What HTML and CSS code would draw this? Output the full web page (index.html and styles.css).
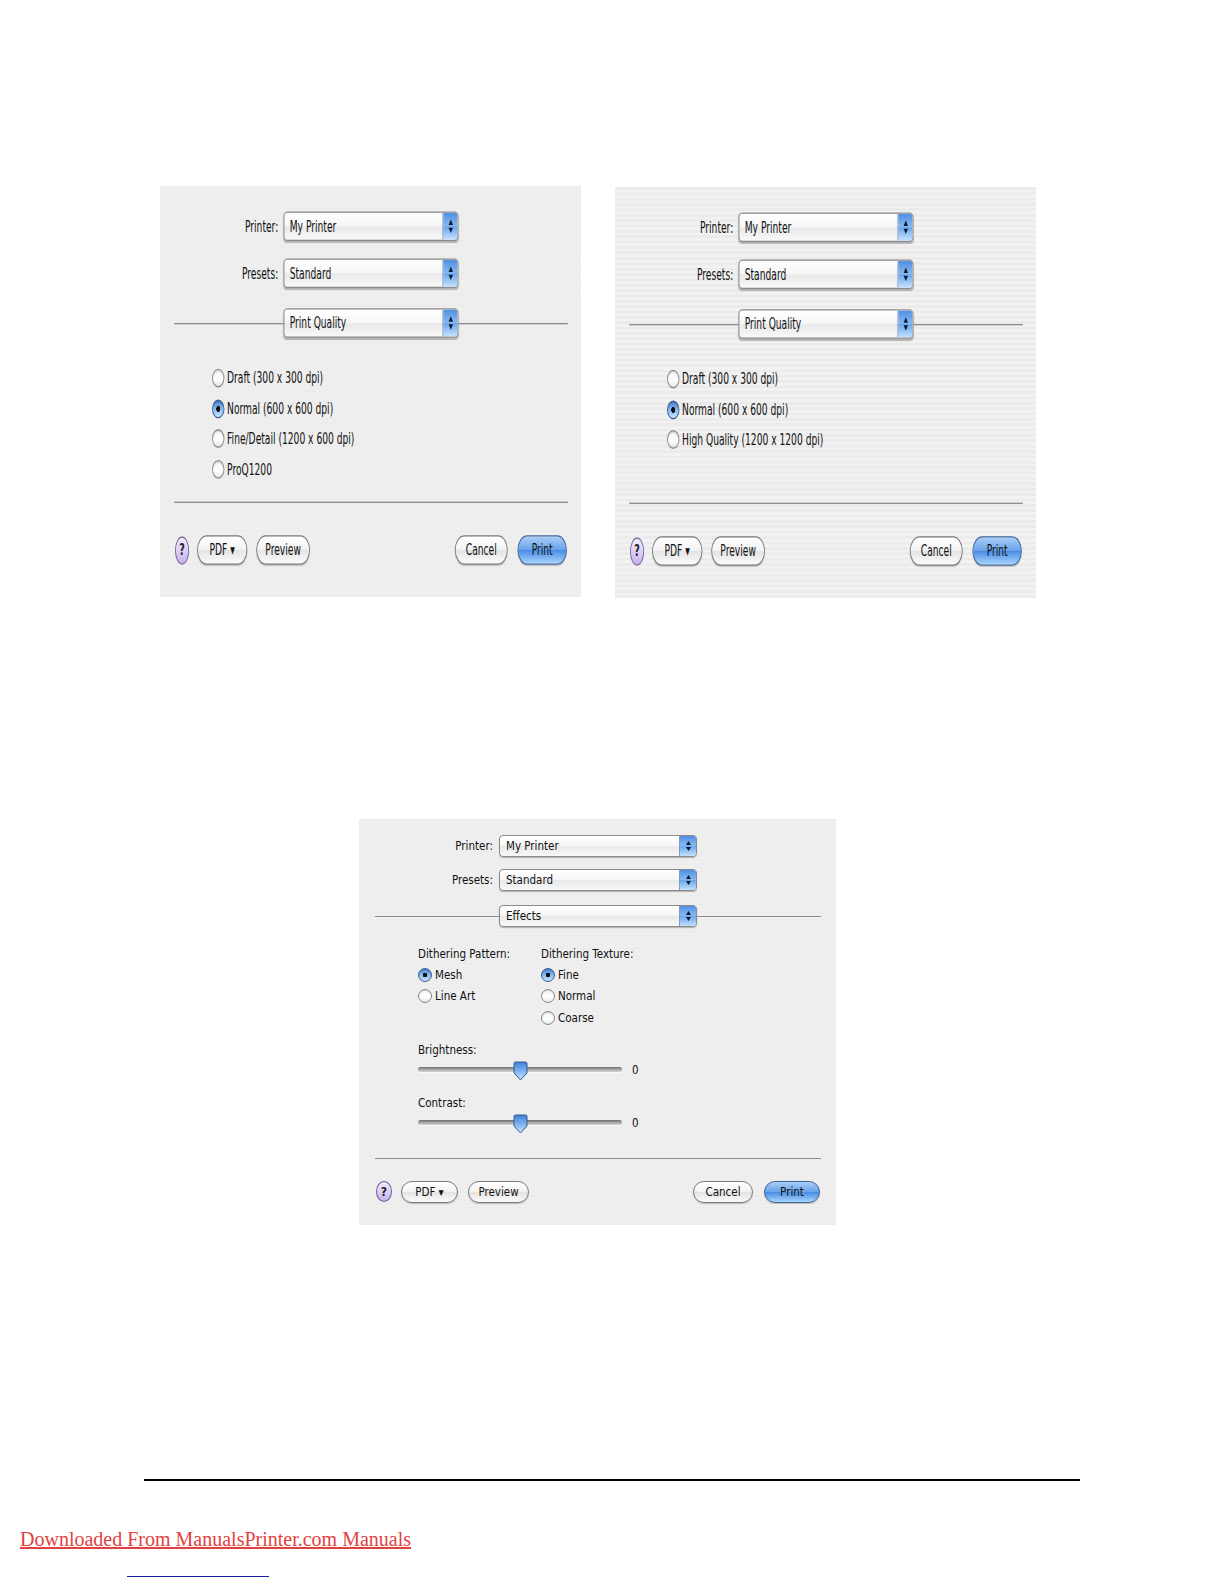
FILE: index.html
```html
<!DOCTYPE html>
<html lang="en">

<head>
    <meta charset="UTF-8">
    <meta name="viewport" content="width=device-width, initial-scale=1.0">
    <title>Print Dialogs</title>
    <link rel="stylesheet" href="styles.css">
</head>

<body>
    <main>
        <div class="shots-row">
            <!-- Print Quality panel, first driver -->
            <div class="shot">
                <div class="dialog dialog-quality">
                    <div class="field">
                        <span class="field-label">Printer:</span>
                        <div class="popup"><span class="popup-text">My Printer</span><span class="popup-arrows"><svg width="7" height="14" viewBox="0 0 7 14"><polygon points="3.5,2 6,6 1,6" /><polygon points="1,8 6,8 3.5,12" /></svg></span></div>
                    </div>
                    <div class="field field-second">
                        <span class="field-label">Presets:</span>
                        <div class="popup"><span class="popup-text">Standard</span><span class="popup-arrows"><svg width="7" height="14" viewBox="0 0 7 14"><polygon points="3.5,2 6,6 1,6" /><polygon points="1,8 6,8 3.5,12" /></svg></span></div>
                    </div>
                    <div class="divider-row">
                        <div class="popup"><span class="popup-text">Print Quality</span><span class="popup-arrows"><svg width="7" height="14" viewBox="0 0 7 14"><polygon points="3.5,2 6,6 1,6" /><polygon points="1,8 6,8 3.5,12" /></svg></span></div>
                    </div>
                    <div class="options">
                        <div class="option"><span class="radio"></span>Draft (300 x 300 dpi)</div>
                        <div class="option"><span class="radio checked"></span>Normal (600 x 600 dpi)</div>
                        <div class="option"><span class="radio"></span>Fine/Detail (1200 x 600 dpi)</div>
                        <div class="option"><span class="radio"></span>ProQ1200</div>
                    </div>
                    <hr class="rule">
                    <div class="actions">
                        <span class="help">?</span>
                        <span class="btn btn-pdf">PDF ▾</span>
                        <span class="btn btn-preview">Preview</span>
                        <span class="btn btn-cancel">Cancel</span>
                        <span class="btn btn-print">Print</span>
                    </div>
                </div>
            </div>

            <!-- Print Quality panel, second driver -->
            <div class="shot">
                <div class="dialog dialog-quality dialog-striped">
                    <div class="field">
                        <span class="field-label">Printer:</span>
                        <div class="popup"><span class="popup-text">My Printer</span><span class="popup-arrows"><svg width="7" height="14" viewBox="0 0 7 14"><polygon points="3.5,2 6,6 1,6" /><polygon points="1,8 6,8 3.5,12" /></svg></span></div>
                    </div>
                    <div class="field field-second">
                        <span class="field-label">Presets:</span>
                        <div class="popup"><span class="popup-text">Standard</span><span class="popup-arrows"><svg width="7" height="14" viewBox="0 0 7 14"><polygon points="3.5,2 6,6 1,6" /><polygon points="1,8 6,8 3.5,12" /></svg></span></div>
                    </div>
                    <div class="divider-row">
                        <div class="popup"><span class="popup-text">Print Quality</span><span class="popup-arrows"><svg width="7" height="14" viewBox="0 0 7 14"><polygon points="3.5,2 6,6 1,6" /><polygon points="1,8 6,8 3.5,12" /></svg></span></div>
                    </div>
                    <div class="options">
                        <div class="option"><span class="radio"></span>Draft (300 x 300 dpi)</div>
                        <div class="option"><span class="radio checked"></span>Normal (600 x 600 dpi)</div>
                        <div class="option"><span class="radio"></span>High Quality (1200 x 1200 dpi)</div>
                    </div>
                    <hr class="rule">
                    <div class="actions">
                        <span class="help">?</span>
                        <span class="btn btn-pdf">PDF ▾</span>
                        <span class="btn btn-preview">Preview</span>
                        <span class="btn btn-cancel">Cancel</span>
                        <span class="btn btn-print">Print</span>
                    </div>
                </div>
            </div>
        </div>

        <!-- Effects panel -->
        <div class="shot-single">
            <div class="dialog dialog-effects">
                <div class="field">
                    <span class="field-label">Printer:</span>
                    <div class="popup"><span class="popup-text">My Printer</span><span class="popup-arrows"><svg width="7" height="14" viewBox="0 0 7 14"><polygon points="3.5,2 6,6 1,6" /><polygon points="1,8 6,8 3.5,12" /></svg></span></div>
                </div>
                <div class="field field-second">
                    <span class="field-label">Presets:</span>
                    <div class="popup"><span class="popup-text">Standard</span><span class="popup-arrows"><svg width="7" height="14" viewBox="0 0 7 14"><polygon points="3.5,2 6,6 1,6" /><polygon points="1,8 6,8 3.5,12" /></svg></span></div>
                </div>
                <div class="divider-row">
                    <div class="popup"><span class="popup-text">Effects</span><span class="popup-arrows"><svg width="7" height="14" viewBox="0 0 7 14"><polygon points="3.5,2 6,6 1,6" /><polygon points="1,8 6,8 3.5,12" /></svg></span></div>
                </div>
                <div class="dither">
                    <div class="dither-col">
                        <div class="group-title">Dithering Pattern:</div>
                        <div class="option"><span class="radio checked"></span>Mesh</div>
                        <div class="option"><span class="radio"></span>Line Art</div>
                    </div>
                    <div class="dither-col">
                        <div class="group-title">Dithering Texture:</div>
                        <div class="option"><span class="radio checked"></span>Fine</div>
                        <div class="option"><span class="radio"></span>Normal</div>
                        <div class="option"><span class="radio"></span>Coarse</div>
                    </div>
                </div>
                <div class="adjust">
                    <div class="group-title">Brightness:</div>
                    <div class="slider">
                        <div class="track">
                            <svg class="thumb" width="15" height="20" viewBox="0 0 15 20">
                                <defs>
                                    <linearGradient id="thumbFill" x1="0" y1="0" x2="0" y2="1">
                                        <stop offset="0" stop-color="#3f7fd6" />
                                        <stop offset="0.5" stop-color="#7db3f0" />
                                        <stop offset="1" stop-color="#c9e4ff" />
                                    </linearGradient>
                                </defs>
                                <path d="M2.5 1 H12.5 Q14 1 14 2.5 V12 L7.5 19 L1 12 V2.5 Q1 1 2.5 1 Z" fill="url(#thumbFill)" stroke="#35598c" stroke-width="1" />
                            </svg>
                        </div>
                        <span class="slider-value">0</span>
                    </div>
                    <div class="group-title group-title-gap">Contrast:</div>
                    <div class="slider">
                        <div class="track">
                            <svg class="thumb" width="15" height="20" viewBox="0 0 15 20">
                                <path d="M2.5 1 H12.5 Q14 1 14 2.5 V12 L7.5 19 L1 12 V2.5 Q1 1 2.5 1 Z" fill="url(#thumbFill)" stroke="#35598c" stroke-width="1" />
                            </svg>
                        </div>
                        <span class="slider-value">0</span>
                    </div>
                </div>
                <hr class="rule">
                <div class="actions">
                    <span class="help">?</span>
                    <span class="btn btn-pdf">PDF ▾</span>
                    <span class="btn btn-preview">Preview</span>
                    <span class="btn btn-cancel">Cancel</span>
                    <span class="btn btn-print">Print</span>
                </div>
            </div>
        </div>
    </main>
    <footer class="page-foot">
        <div class="foot-rule"></div>
        <div class="source"><a class="source-link" href="#">Downloaded From ManualsPrinter.com Manuals</a></div>
        <div class="blue-rule"></div>
    </footer>
</body>

</html>
```

FILE: styles.css
```css
* {
    box-sizing: border-box;
}

body {
    margin: 0;
    background-color: #fff;
    font-family: "Liberation Serif", serif;
}

.shots-row {
    display: flex;
    align-items: flex-start;
    gap: 34px;
    padding: 186px 0 0 160px;
}

/* the two upper screenshots are squeezed sideways and stretched tall */
.shot {
    width: 421px;
    height: 411px;
    overflow: hidden;
    background-color: #ededed;
}

.shot + .shot {
    margin-top: 1px;
}

.shot .dialog {
    transform: scale(0.8826, 1.343);
    transform-origin: 0 0;
}

.shot-single {
    padding: 221px 0 0 359px;
}

.dialog {
    display: flex;
    flex-direction: column;
    width: 477px;
    padding: 0 15px 0 16px;
    background-color: #ededed;
    background-image: repeating-linear-gradient(#ededed 0 2px, #efefef 2px 4px);
    font-family: "DejaVu Sans Condensed", "DejaVu Sans", sans-serif;
    font-stretch: condensed;
    font-size: 11.5px;
    color: #111;
}

.dialog-striped {
    background-image: repeating-linear-gradient(#ebebeb 0 2px, #f2f2f2 2px 4px);
}

.dialog-quality {
    height: 306px;
    padding-top: 19px;
}

.dialog-effects {
    height: 406px;
    padding-top: 16px;
}

.field {
    display: flex;
    align-items: center;
    height: 22px;
}

.field-second {
    margin-top: 13px;
}

.dialog-effects .field-second {
    margin-top: 12px;
}

.field-label {
    width: 118px;
    margin-right: 6px;
    text-align: right;
}

.popup {
    display: flex;
    width: 198px;
    height: 22px;
    border: 1px solid #8a8a8a;
    border-radius: 4px;
    background: linear-gradient(#ffffff, #f6f6f6 48%, #e9e9e9 52%, #f8f8f8);
    box-shadow: 0 1px 1px rgba(0, 0, 0, 0.25);
    overflow: hidden;
}

.popup-text {
    flex: 1;
    padding-left: 6px;
    line-height: 20px;
}

.popup-arrows {
    display: flex;
    align-items: center;
    justify-content: center;
    width: 17px;
    border-left: 1px solid #7d9cc6;
    background: linear-gradient(#4f8fe3, #86b9f1 48%, #6aa7ee 52%, #c4e2ff);
}

.popup-arrows svg {
    fill: #0d1a2e;
}

.divider-row {
    display: flex;
    align-items: center;
    height: 22px;
    margin-top: 15px;
}

.dialog-effects .divider-row {
    margin-top: 14px;
}

.divider-row::before,
.divider-row::after {
    content: "";
    flex: 1;
    height: 1px;
    background-color: #8c8c8c;
}

.options {
    margin: 19px 0 0 43px;
    min-height: 90px;
}

.option {
    display: flex;
    align-items: center;
    gap: 3px;
    height: 22.5px;
}

.radio {
    width: 14px;
    height: 14px;
    border: 1px solid #8a8a8a;
    border-radius: 50%;
    background: linear-gradient(#f4f4f4, #ffffff 60%, #e2e2e2);
    box-shadow: inset 0 1px 1px rgba(0, 0, 0, 0.15);
}

.radio.checked {
    border-color: #3b5d8f;
    background:
        radial-gradient(circle, #101010 0 2px, transparent 2.5px),
        linear-gradient(#4c87d8, #8dbdf2 55%, #c8e4ff);
}

.rule {
    width: 100%;
    height: 1px;
    margin: 13px 0 0;
    border: none;
    background-color: #8c8c8c;
}

.actions {
    display: flex;
    align-items: center;
    height: 22px;
    margin-top: 24px;
    padding: 0 1px;
}

.help {
    display: flex;
    align-items: center;
    justify-content: center;
    width: 16px;
    height: 21px;
    border: 1px solid #6c5f8e;
    border-radius: 50%;
    background: linear-gradient(#f3ebff, #d8c8f5 60%, #c6b0ec);
    font-family: "DejaVu Sans", sans-serif;
    font-size: 12px;
    font-weight: bold;
    color: #222;
}

.btn {
    display: flex;
    align-items: center;
    justify-content: center;
    height: 22px;
    border: 1px solid #7a7a7a;
    border-radius: 11px;
    background: linear-gradient(#ffffff, #f3f3f3 48%, #e4e4e4 52%, #fbfbfb);
    box-shadow: 0 1px 1px rgba(0, 0, 0, 0.2);
}

.btn-pdf {
    width: 57px;
    margin-left: 9px;
}

.btn-preview {
    width: 61px;
    margin-left: 10px;
}

.btn-cancel {
    width: 60px;
    margin-left: auto;
}

.btn-print {
    width: 56px;
    margin-left: 11px;
    border-color: #3f6498;
    background: linear-gradient(#a9cdf6, #6aa4ea 48%, #4a8ee6 52%, #a8d4fd);
}

/* effects panel */
.dither {
    display: flex;
    margin: 19px 0 0 43px;
}

.dither-col {
    width: 123px;
}

.group-title {
    height: 16px;
    line-height: 16px;
    margin-bottom: 2px;
}

.dither .option {
    height: 21.5px;
}

.adjust {
    margin: 13px 0 0 43px;
}

.group-title-gap {
    margin-top: 15px;
}

.slider {
    display: flex;
    align-items: center;
    height: 20px;
}

.track {
    position: relative;
    width: 204px;
    height: 5px;
    border-radius: 3px;
    background: linear-gradient(#6a6a6a, #a2a2a2 45%, #d4d4d4);
    box-shadow: 0 1px 0 #fafafa;
}

.thumb {
    position: absolute;
    left: 95px;
    top: -6px;
}

.slider-value {
    margin-left: 10px;
}

.dialog-effects .rule {
    margin-top: 25px;
}

.dialog-effects .actions {
    margin-top: 22px;
}

/* page footer */
.foot-rule {
    width: 936px;
    height: 2px;
    margin: 254px 0 0 144px;
    background-color: #000;
}

.source {
    margin: 48px 0 0 20px;
    line-height: 20px;
}

.source-link {
    font-size: 20px;
    color: #e23f3f;
    text-decoration: underline;
}

.blue-rule {
    width: 142px;
    height: 1px;
    margin: 25px 0 0 127px;
    background-color: #1c1c9e;
}
```
